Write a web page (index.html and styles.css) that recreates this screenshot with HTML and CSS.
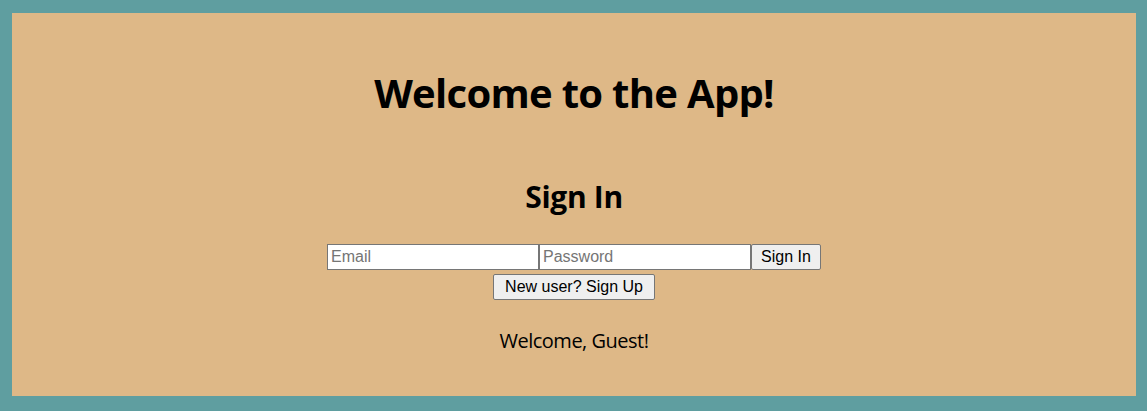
FILE: index.html
```html
<!DOCTYPE html>
<html lang="en">
<head>
<meta charset="utf-8">
<title>App</title>
<link rel="stylesheet" href="styles.css">
</head>
<body>
<div class="app">
  <h1 class="title">Welcome to the App!</h1>
  <h2 class="subtitle">Sign In</h2>
  <form class="form">
    <div class="row"><input class="field" type="email" placeholder="Email"><input class="field" type="password" placeholder="Password"><button class="btn btn-signin" type="button">Sign In</button></div>
    <div class="row"><button class="btn btn-signup" type="button">New user? Sign Up</button></div>
  </form>
  <p class="greeting">Welcome, Guest!</p>
</div>
</body>
</html>
```
FILE: styles.css
```css
html, body {
  margin: 0;
  padding: 0;
  background: #5f9ea0;
  height: 100%;
}
body {
  padding: 13px 11px 15px 12px;
  box-sizing: border-box;
}
.app {
  background: #deb887;
  height: 383px;
  display: flex;
  flex-direction: column;
  align-items: center;
  font-family: "Open Sans", "Noto Sans", sans-serif;
  color: #000;
}
.title {
  font-size: 40px;
  font-weight: 700;
  line-height: 48px;
  letter-spacing: -0.7px;
  margin: 56px 0 0;
}
.subtitle {
  font-size: 30px;
  font-weight: 700;
  line-height: 36px;
  letter-spacing: -0.3px;
  margin: 62px 0 0;
}
.form {
  margin: 29px 0 0;
  display: flex;
  flex-direction: column;
  align-items: center;
  gap: 4px;
}
.row {
  display: flex;
}
.field {
  width: 212px;
  height: 26px;
  box-sizing: border-box;
  margin: 0;
  padding: 1px 3px;
  border: 1px solid #767676;
  background: #fff;
  font-family: "Liberation Sans", Arial, sans-serif;
  font-size: 16px;
  color: #000;
  outline: none;
}
.field::placeholder {
  color: #757575;
}
.btn {
  height: 26px;
  box-sizing: border-box;
  margin: 0;
  padding: 1px 8px;
  border: 1px solid #767676;
  border-radius: 2px;
  background: #efefef;
  font-family: "Liberation Sans", Arial, sans-serif;
  font-size: 16px;
  color: #000;
}
.btn-signin { width: 70px; }
.btn-signup { width: 162px; }
.greeting {
  font-size: 20px;
  line-height: 24px;
  letter-spacing: -0.5px;
  margin: 29px 0 0;
}
```
